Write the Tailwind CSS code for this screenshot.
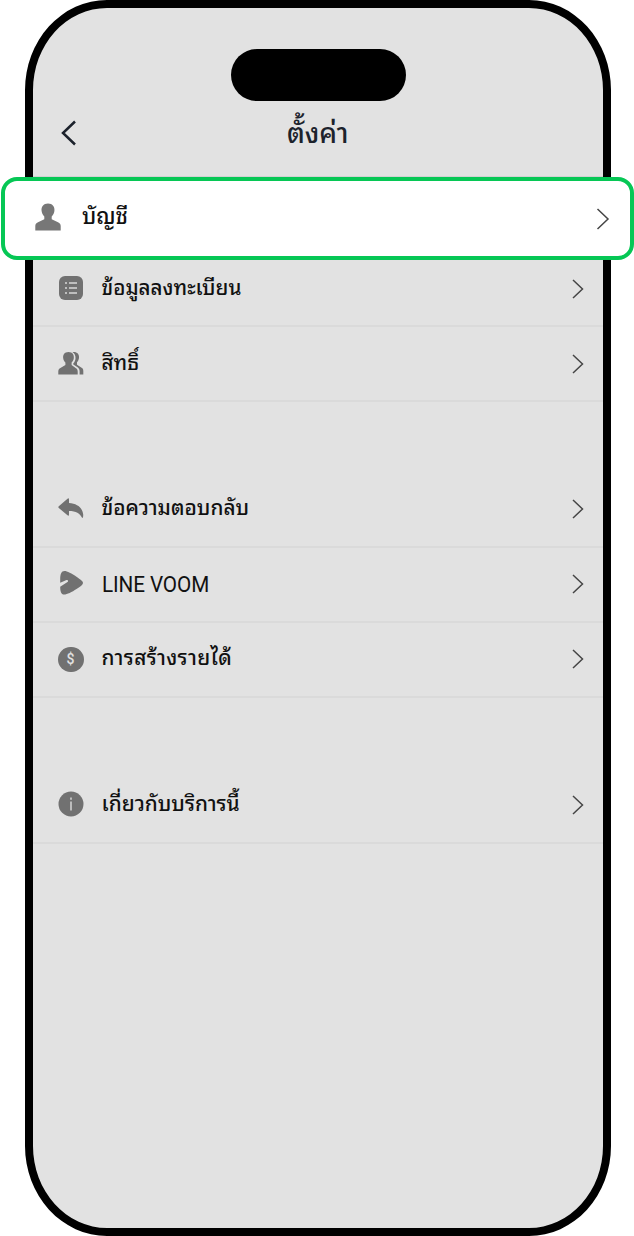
<!DOCTYPE html>
<html lang="th">
<head>
<meta charset="utf-8">
<title>ตั้งค่า</title>
<script src="https://cdn.jsdelivr.net/npm/@tailwindcss/browser@4"></script>
</head>
<body class="bg-white">
<main class="relative h-[1236px] w-[634px] overflow-hidden font-['Roboto','Noto_Sans_Thai_Looped','Loma',sans-serif] text-[#111111]">
  <div class="ml-[24.500px] flex h-[1236px] w-[586.500px] flex-col overflow-hidden rounded-[82px/90px] border-8 border-black bg-[#e2e2e2]">
    <div class="mx-auto mt-[41px] h-[52px] w-[175px] shrink-0 translate-x-px rounded-full bg-black"></div>
    <header class="grid h-[75px] shrink-0 grid-cols-[1fr_auto_1fr] items-start pl-[27px] pr-[27px] text-[#1c222c]">
      <svg class="mt-[19px] h-[26px] w-[18px]" viewBox="0 0 18 26" fill="none" stroke="currentColor" stroke-width="2.500"><path d="M15 1.500 3 13 15 24.500"/></svg>
      <h1 class="mt-[17px] text-[27.500px] font-medium leading-8">ตั้งค่า</h1>
      <span></span>
    </header>
    <div class="h-[67px] shrink-0 border-t-2 border-[#d2d2d2]"></div>
    <ul class="[&_svg]:shrink-0">
      <li class="flex h-[84px] items-center border-b-2 border-[#dadada] pl-[25px] pr-[18px]">
        <svg class="mt-[7px] h-[26px] w-[26px] text-[#717171]" viewBox="0 0 26 26"><rect x="1" y="1" width="24" height="24" rx="6" fill="currentColor"/><path d="M7 8h2M7 13h2M7 18h2M11 8h8M11 13h8M11 18h8" stroke="#d8d8d8" stroke-width="1.500"/></svg>
        <span class="ml-[18px] mt-[9px] flex-1 text-[20.600px] font-medium">ข้อมูลลงทะเบียน</span>
        <svg class="mt-[10px] h-[22px] w-[14px]" viewBox="0 0 14 22" fill="none" stroke="#454545" stroke-width="1.500"><path d="m2 2 9.500 9-9.500 9"/></svg>
      </li>
      <li class="flex h-[75px] items-center border-b-2 border-[#dadada] pl-[25px] pr-[18px]">
        <svg class="-mt-[2px] h-[26px] w-[26px] text-[#717171]" viewBox="0 0 26 26" fill="currentColor"><path d="M10.500 2C6.500 2 4.800 4.800 5.200 8.200c.3 2.200 1.200 3.200 2.200 4.400v2.400L2 18.300C.9 19 .3 20 .3 21.500V24.500h19.400v-3c0-1.500-.6-2.500-1.700-3.200l-4.400-3.300v-2.400c1-1.200 1.900-2.200 2.200-4.400C16.200 4.800 14.500 2 10.500 2Z"/><path d="M14.500 2.200c4-.7 7 1.700 6.500 5.800-.3 2-1 3.200-2 4.300v2.500l5 3.300c1 .7 1.300 1.600 1.300 2.800v3.600h-3.700v-3.200c0-2-1-3.300-2.400-4.200L15.300 14.500v-1.200c1.200-1.200 2-2.800 2.200-4.900.2-2.700-.8-5-3-6.200Z"/></svg>
        <span class="ml-[18px] flex-1 text-[20.600px] font-medium">สิทธิ์</span>
        <svg class="h-[22px] w-[14px]" viewBox="0 0 14 22" fill="none" stroke="#454545" stroke-width="1.500"><path d="m2 2 9.500 9-9.500 9"/></svg>
      </li>
    </ul>
    <ul class="mt-[70.500px] [&_svg]:shrink-0">
      <li class="flex h-[75px] items-center border-b-2 border-[#dadada] pl-[25px] pr-[18px]">
        <svg class="h-[26px] w-[26px] text-[#717171]" viewBox="0 0 26 26" fill="currentColor"><path d="M.8 10.200 9.500 2.700Q11 1.500 11 3.500V7c8.500.5 13.500 5 14.200 11.500.1 2-.2 3.500-1 3.500C22 17.500 18 15 11 15v3.500q0 2-1.500.8L.8 12Q-.2 11.100.8 10.200Z"/></svg>
        <span class="ml-[18px] flex-1 text-[20.800px] font-medium">ข้อความตอบกลับ</span>
        <svg class="h-[22px] w-[14px]" viewBox="0 0 14 22" fill="none" stroke="#454545" stroke-width="1.500"><path d="m2 2 9.500 9-9.500 9"/></svg>
      </li>
      <li class="flex h-[75px] items-center border-b-2 border-[#dadada] pl-[25px] pr-[18px]">
        <svg class="-mt-[2px] h-[26px] w-[26px] text-[#717171]" viewBox="0 0 26 26" fill="currentColor"><path d="M2.200 8.500C2.300 4.500 3.300 1 6.500 1c2.500 0 7.500 2.500 12 5.800 4 2.800 6.500 4.400 6.500 6.200s-2.500 3.500-6.500 6c-4.500 3-9.500 5.500-12.300 5.500-3.200 0-4-3.500-4-7.800L9.500 12c1.200-.8.4-2.600-1-2L2.200 12.800Z"/></svg>
        <span class="ml-[18px] flex-1 text-[22px] tracking-[-0.100px]"><span class="inline-block origin-left scale-x-[0.940]">LINE VOOM</span></span>
        <svg class="h-[22px] w-[14px]" viewBox="0 0 14 22" fill="none" stroke="#454545" stroke-width="1.500"><path d="m2 2 9.500 9-9.500 9"/></svg>
      </li>
      <li class="flex h-[75px] items-center border-b-2 border-[#dadada] pl-[25px] pr-[18px]">
        <span class="flex h-[25px] w-[26px] items-center justify-center rounded-full bg-[#717171] text-[14px] font-medium leading-none text-[#e2e2e2]">$</span>
        <span class="ml-[18px] flex-1 text-[20.800px] font-medium tracking-[0.350px]">การสร้างรายได้</span>
        <svg class="h-[22px] w-[14px]" viewBox="0 0 14 22" fill="none" stroke="#454545" stroke-width="1.500"><path d="m2 2 9.500 9-9.500 9"/></svg>
      </li>
    </ul>
    <ul class="mt-[71px] [&_svg]:shrink-0">
      <li class="flex h-[75px] items-center border-b-2 border-[#dadada] pl-[25px] pr-[18px]">
        <svg class="-mt-[2px] h-[26px] w-[26px]" viewBox="0 0 26 26"><circle cx="13" cy="13" r="12.500" fill="#717171"/><path d="M13 6.500v2.200M13 10.500v9" stroke="#d0d0d0" stroke-width="1.600"/></svg>
        <span class="ml-[18px] flex-1 text-[20.800px] font-medium">เกี่ยวกับบริการนี้</span>
        <svg class="h-[22px] w-[14px]" viewBox="0 0 14 22" fill="none" stroke="#454545" stroke-width="1.500"><path d="m2 2 9.500 9-9.500 9"/></svg>
      </li>
    </ul>
  </div>
  <div class="absolute left-[1px] top-[177px] flex h-[83px] w-[633px] items-center rounded-[16px] border-4 border-[#06c755] bg-white pl-[30px] pr-[20px]">
    <svg class="-mt-[3px] h-[28px] w-[26px] text-[#777777]" viewBox="0 0 26 28" fill="currentColor"><path d="M13 .5C8.500.500 6 3.800 6.600 8c.3 2.300 1.200 4 2.700 5.600v2.600L3 19.200C1.200 20 .3 21.200.3 23v4.500h25.400V23c0-1.800-.9-3-2.700-3.800l-6.300-3v-2.600c1.500-1.600 2.400-3.300 2.700-5.600C20 3.800 17.500.500 13 .500Z"/></svg>
    <span class="-mt-[2px] ml-[21px] flex-1 text-[21.800px] font-medium">บัญชี</span>
    <svg class="h-[24px] w-[14px]" viewBox="0 0 14 24" fill="none" stroke="#454545" stroke-width="1.500"><path d="m1.500 2 10.500 10-10.500 10"/></svg>
  </div>
</main>
</body>
</html>
